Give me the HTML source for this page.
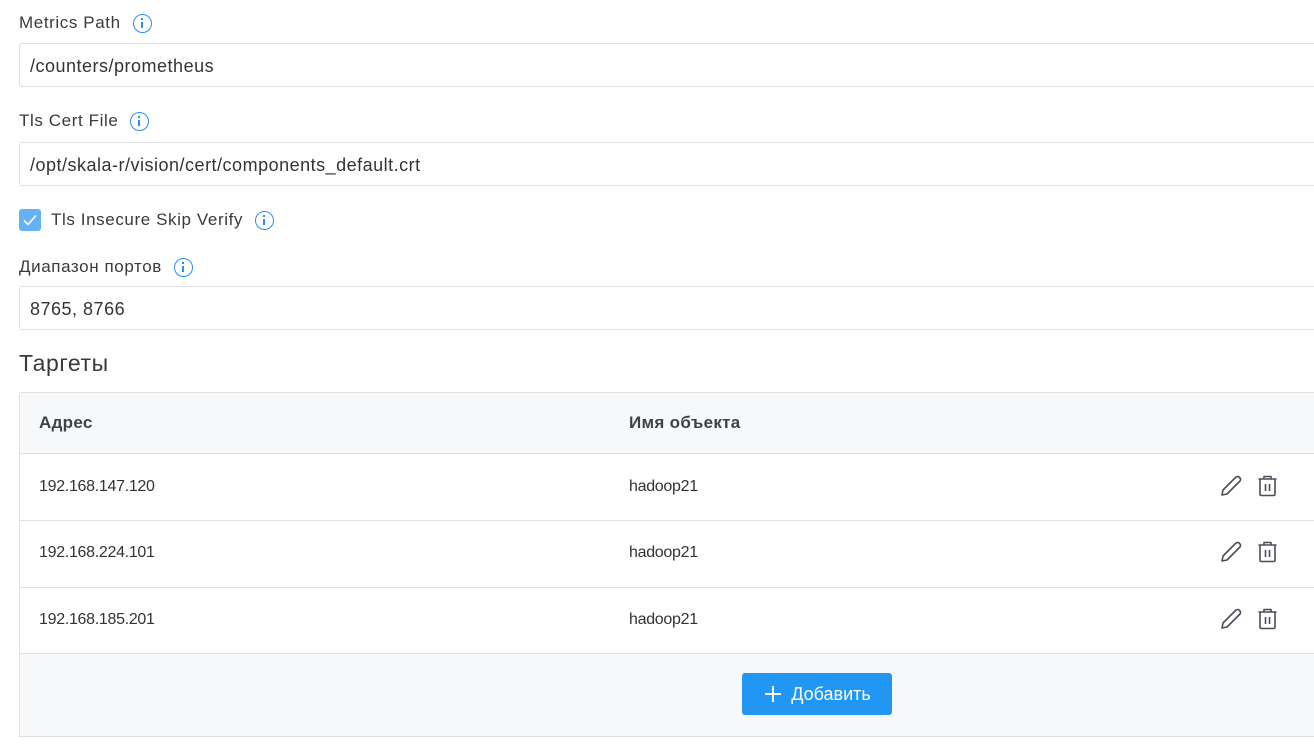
<!DOCTYPE html>
<html><head><meta charset="utf-8"><style>
*{box-sizing:border-box;margin:0;padding:0}
body{width:1314px;height:755px;overflow:hidden;background:#fff;font-family:"Liberation Sans","DejaVu Sans",sans-serif;color:#333;position:relative}
.lbl{position:absolute;left:19px;font-size:17px;letter-spacing:0.6px;color:#3a3a3a;display:flex;align-items:center}
.info{display:inline-block;width:19px;height:19px;border:1.5px solid #2a8ef0;border-radius:50%;margin-left:12px;position:relative}
.info:before{content:"";position:absolute;left:7px;top:3px;width:2px;height:2px;background:#2a8ef0}
.info:after{content:"";position:absolute;left:7px;top:7px;width:2px;height:6px;background:#2a8ef0}
.inp{position:absolute;left:19px;width:1310px;height:44px;border:1px solid #dcdde1;border-radius:3px;font-size:18px;letter-spacing:0.5px;color:#333;padding:0 0 0 10px;line-height:44px}
.cb{position:absolute;left:19px;top:209px;width:22px;height:22px;background:#64b2f4;border-radius:3px}
.tbl{position:absolute;left:19px;top:392px;width:1310px;height:345px;border:1px solid #dfe0e4;border-bottom:2px solid #dcdde1;border-radius:3px 3px 0 0}
.row{position:absolute;left:0;width:1310px;border-bottom:1px solid #dfe0e4;font-size:16px;letter-spacing:-0.3px;color:#333}
.c1{position:absolute;left:19px}
.c2{position:absolute;left:609px}
.btn{position:absolute;left:722px;top:280px;width:150px;height:42px;background:#2196f3;border-radius:3px;color:#fff;font-size:18px;display:flex;align-items:center;justify-content:center}
</style></head><body>
<div class="lbl" style="top:13px">Metrics Path<span class="info"></span></div>
<div class="inp" style="top:43px">/counters/prometheus</div>
<div class="lbl" style="top:111px">Tls Cert File<span class="info"></span></div>
<div class="inp" style="top:142px">/opt/skala-r/vision/cert/components_default.crt</div>
<div class="cb"><svg width="22" height="22" viewBox="0 0 22 22"><path d="M5 11.5l4 4 8-9" stroke="#fff" stroke-width="1.6" fill="none"/></svg></div>
<div class="lbl" style="top:210px;left:51px">Tls Insecure Skip Verify<span class="info"></span></div>
<div class="lbl" style="top:257px">Диапазон портов<span class="info"></span></div>
<div class="inp" style="top:286px">8765, 8766</div>
<div style="position:absolute;left:19px;top:350px;font-size:23px;letter-spacing:0.6px;color:#3a3a3a">Таргеты</div>
<div class="tbl">
 <div class="row" style="top:0;height:61px;background:#f7f8fa;font-weight:bold;color:#3d4148;font-size:17px;letter-spacing:0.3px"><span class="c1" style="top:20px">Адрес</span><span class="c2" style="top:20px">Имя объекта</span></div>
 <div class="row" style="top:61px;height:67px"><span class="c1" style="top:24px">192.168.147.120</span><span class="c2" style="top:24px">hadoop21</span></div>
 <div class="row" style="top:128px;height:67px"><span class="c1" style="top:23px">192.168.224.101</span><span class="c2" style="top:23px">hadoop21</span></div>
 <div class="row" style="top:195px;height:66px"><span class="c1" style="top:23px">192.168.185.201</span><span class="c2" style="top:23px">hadoop21</span></div>
 <div style="position:absolute;top:261px;left:0;width:1310px;height:82px;background:#f7f8fa"></div>
 <div class="btn"><svg width="20" height="20" viewBox="0 0 20 20" style="margin-right:8px"><path d="M10 2v16M2 10h16" stroke="#fff" stroke-width="2"/></svg>Добавить</div>
</div>
<svg style="position:absolute;left:0;top:0" width="1314" height="755">
<g fill="none" stroke="#4a4f57" stroke-width="1.6" stroke-linejoin="round">
<g id="ic"><path d="M1222 495l1-5 13-13q2-1 3 0l1 1q1 1 0 3l-13 13z"/>
<path d="M1258.5 479h18M1264 479v-2.5h7v2.5M1260 479.5v14.5q0 1.5 1.5 1.5h12q1.5 0 1.5-1.5v-14.5M1265.5 484v7M1269.5 484v7"/></g>
<use href="#ic" y="66"/><use href="#ic" y="133"/>
</g></svg>
</body></html>
